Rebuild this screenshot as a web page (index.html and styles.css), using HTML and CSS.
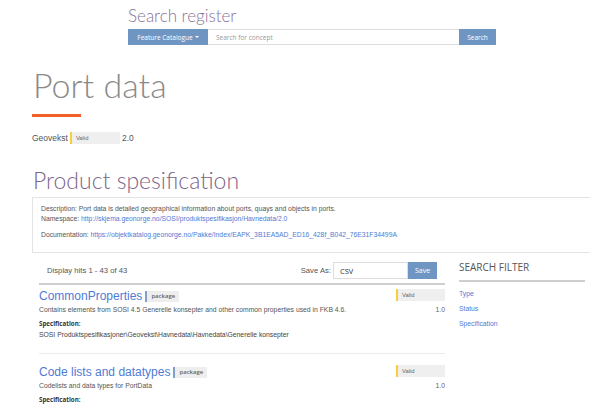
FILE: index.html
```html
<!DOCTYPE html>
<html lang="en">
<head>
<meta charset="utf-8">
<title>Port data</title>
<link rel="stylesheet" href="styles.css">
</head>
<body>
<header class="site-header">
  <h1 class="site-title">Search register</h1>
  <form class="search-group">
    <button type="button" class="btn btn-blue dropdown">Feature Catalogue <span class="caret"></span></button>
    <input class="search-input" type="text" placeholder="Search for concept">
    <button type="button" class="btn btn-blue search-btn">Search</button>
  </form>
</header>

<main class="page">
  <h1 class="page-title">Port data</h1>
  <div class="title-rule"></div>
  <div class="meta">
    <span>Geovekst</span>
    <span class="status status-wide">Valid</span>
    <span>2.0</span>
  </div>

  <h2 class="section-title">Product spesification</h2>
  <div class="info-box">
    <p>Description: Port data is detailed geographical information about ports, quays and objects in ports.<br>
    Namespace: <a href="#">http://skjema.geonorge.no/SOSI/produktspesifikasjon/Havnedata/2.0</a></p>
    <p>Documentation: <a href="#">https://objektkatalog.geonorge.no/Pakke/Index/EAPK_3B1EA5AD_ED16_428f_B042_76E31F34499A</a></p>
  </div>

  <div class="content">
    <section class="results">
      <div class="results-head">
        <span class="hits">Display hits 1 - 43 of 43</span>
        <div class="save-as">
          <span class="save-label">Save As:</span>
          <input class="save-input" type="text" value="CSV">
          <button type="button" class="btn btn-blue save-btn">Save</button>
        </div>
      </div>

      <article class="item">
        <div class="item-top">
          <h3 class="item-title"><a href="#">CommonProperties</a> <span class="tag">package</span></h3>
          <span class="status">Valid</span>
        </div>
        <div class="item-desc">
          <span>Contains elements from SOSI 4.5 Generelle konsepter and other common properties used in FKB 4.6.</span>
          <span class="version">1.0</span>
        </div>
        <div class="spec-label">Specification:</div>
        <div class="spec-path">SOSI Produktspesifikasjoner\Geovekst\Havnedata\Havnedata\Generelle konsepter</div>
      </article>

      <article class="item">
        <div class="item-top">
          <h3 class="item-title"><a href="#">Code lists and datatypes</a> <span class="tag">package</span></h3>
          <span class="status">Valid</span>
        </div>
        <div class="item-desc">
          <span>Codelists and data types for PortData</span>
          <span class="version">1.0</span>
        </div>
        <div class="spec-label">Specification:</div>
        <div class="spec-path">SOSI Produktspesifikasjoner\Geovekst\Havnedata\Havnedata\Kodelister og datatyper</div>
      </article>
    </section>

    <aside class="filter">
      <h4 class="filter-title">SEARCH FILTER</h4>
      <ul class="filter-list">
        <li><a href="#">Type</a></li>
        <li><a href="#">Status</a></li>
        <li><a href="#">Specification</a></li>
      </ul>
    </aside>
  </div>
</main>
</body>
</html>
```

FILE: styles.css
```css
html, body {
  margin: 0;
  padding: 0;
  background: #fff;
  overflow: hidden;
}

body {
  font-family: "Liberation Sans", Arial, sans-serif;
  color: #555;
  width: 590px;
  height: 407px;
}

a {
  color: #4f7bd4;
  text-decoration: none;
}

/* ---------- header ---------- */
.site-header {
  padding: 5px 0 0 128px;
}

.site-title {
  margin: 0;
  font-family: Lato, "Open Sans", sans-serif;
  font-weight: 300;
  font-size: 17px;
  line-height: 22px;
  color: #85739a;
}

.search-group {
  display: flex;
  margin-top: 2px;
  width: 368px;
  height: 16px;
}

.btn {
  border: 0;
  margin: 0;
  padding: 0;
  font-family: "Open Sans", sans-serif;
  font-size: 6.5px;
  color: #fff;
  cursor: pointer;
}

.btn-blue {
  background: #6f96c3;
}

.dropdown {
  width: 80px;
  display: flex;
  align-items: center;
  justify-content: center;
  gap: 2px;
}

.caret {
  width: 0;
  height: 0;
  border-left: 2px solid transparent;
  border-right: 2px solid transparent;
  border-top: 2px solid #fff;
}

.search-input {
  flex: 1;
  min-width: 0;
  margin: 0;
  border: 1px solid #ddd;
  border-left: 0;
  border-right: 0;
  padding: 0 8px;
  font-family: "Open Sans", sans-serif;
  font-size: 6.5px;
  outline: none;
}

.search-input::placeholder {
  color: #999;
}

.search-btn {
  width: 37px;
}

/* ---------- page ---------- */
.page {
  padding-left: 32px;
}

.page-title {
  margin: 20px 0 0 1px;
  font-family: Lato, "Open Sans", sans-serif;
  font-weight: 300;
  font-size: 34px;
  line-height: 40px;
  color: #8a8a8a;
}

.title-rule {
  width: 49px;
  height: 3px;
  margin-top: 9px;
  background: #f2612a;
}

.meta {
  display: flex;
  align-items: center;
  gap: 2px;
  margin-top: 15px;
  font-size: 8.5px;
  color: #555;
}

.status {
  display: inline-flex;
  align-items: center;
  box-sizing: border-box;
  width: 49px;
  height: 12px;
  padding-left: 4px;
  border-left: 2px solid #f5cf3c;
  background: #efefef;
  font-size: 5.8px;
  color: #666;
}

.status-wide {
  width: 50px;
}

.section-title {
  margin: 23px 0 0 1px;
  font-family: Lato, "Open Sans", sans-serif;
  font-weight: 300;
  font-size: 23px;
  line-height: 26px;
  color: #7d6489;
}

/* the box runs on past the right edge of the page */
.info-box {
  box-sizing: border-box;
  height: 56px;
  margin-top: 4px;
  padding: 6px 8px;
  border: 1px solid #e4e4e4;
  border-right: 0;
  font-size: 6.8px;
  line-height: 10px;
  color: #555;
}

.info-box p {
  margin: 0 0 6px;
}

/* ---------- results + filter ---------- */
.content {
  display: flex;
  gap: 14px;
  margin-top: 4px;
  padding-left: 7px;
}

.results {
  width: 406px;
}

.results-head {
  display: flex;
  align-items: center;
  justify-content: space-between;
  padding: 5px 8px 4px 8px;
  border-bottom: 2px solid #cfcfcf;
  font-size: 7.7px;
  color: #555;
}

.save-as {
  display: flex;
  align-items: center;
}

.save-label {
  margin-right: 2px;
}

.save-input {
  box-sizing: border-box;
  width: 75px;
  height: 17px;
  margin: 0;
  padding: 0 6px;
  border: 1px solid #ddd;
  font-family: "Open Sans", sans-serif;
  font-size: 7.5px;
  color: #333;
  outline: none;
}

.save-btn {
  width: 29px;
  height: 17px;
  font-size: 7px;
}

.item {
  padding: 4px 0 13px;
  border-bottom: 1px solid #ececec;
}

.item + .item {
  padding-top: 11px;
}

.item-top {
  display: flex;
  align-items: flex-start;
  justify-content: space-between;
}

.item-title {
  display: flex;
  align-items: center;
  gap: 3px;
  margin: 0;
  font-weight: normal;
  font-size: 12px;
  line-height: 14px;
}

.tag {
  display: inline-flex;
  align-items: center;
  height: 11px;
  padding: 0 4px 0 4px;
  border-left: 2px solid #7fa0cc;
  background: #eeeeee;
  font-family: "Open Sans", sans-serif;
  font-weight: 600;
  font-size: 6px;
  color: #666;
}

.item-desc {
  display: flex;
  justify-content: space-between;
  margin-top: 2px;
  font-size: 6.8px;
  line-height: 10px;
  color: #555;
}

.version {
  color: #666;
}

.spec-label {
  margin-top: 4px;
  font-family: "Open Sans", sans-serif;
  font-weight: 700;
  font-size: 6.2px;
  line-height: 10px;
  color: #333;
}

.spec-path {
  font-size: 6.8px;
  line-height: 11px;
  color: #444;
}

.filter {
  width: 126px;
}

.filter-title {
  margin: 0;
  padding: 4px 0 6px;
  border-bottom: 2px solid #cfcfcf;
  font-family: "Open Sans", sans-serif;
  font-weight: 400;
  font-size: 10px;
  line-height: 13px;
  color: #555;
}

.filter-list {
  list-style: none;
  margin: 0;
  padding: 4px 0 0;
  font-size: 6.8px;
  line-height: 15px;
}
```
